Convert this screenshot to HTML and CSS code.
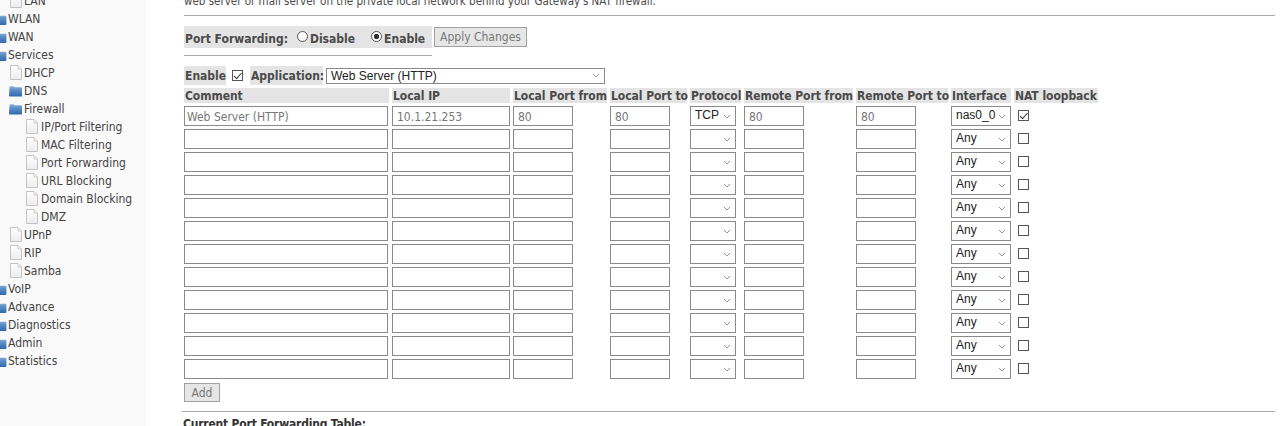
FILE: index.html
```html
<!DOCTYPE html>
<html lang="en">
<head>
<meta charset="utf-8">
<title>Port Forwarding</title>
<link rel="stylesheet" href="styles.css">
</head>
<body>
<svg class="defs" width="0" height="0" aria-hidden="true">
  <defs>
    <linearGradient id="fg" x1="0" y1="0" x2="0" y2="1"><stop offset="0" stop-color="#8fb4dc"/><stop offset=".35" stop-color="#5f90c8"/><stop offset="1" stop-color="#2f69ad"/></linearGradient>
    <linearGradient id="pg" x1="0" y1="0" x2="0" y2="1"><stop offset="0" stop-color="#ffffff"/><stop offset="1" stop-color="#ececec"/></linearGradient>
  </defs>
  <symbol id="book" viewBox="0 0 14 12"><path d="M.5 2 Q.5 .8 1.7 .8 L5 .8 L6 2 L13 2 Q14 2 14 3 L14 11 Q14 12 13 12 L1 12 Q0 12 0 11Z" fill="url(#fg)"/></symbol>
  <symbol id="page" viewBox="0 0 12 15"><path d="M.5 .5 H8 L11.5 4 V14.5 H.5Z" fill="url(#pg)" stroke="#c4c4c4"/><path d="M8 .5 V4 H11.5" fill="none" stroke="#cfcfcf"/></symbol>
</svg>
<div class="page">
  <nav class="side">
    <div class="item l1 first"><svg class="ipage"><use href="#page"/></svg>LAN</div>
    <div class="item l0"><svg class="ifold"><use href="#book"/></svg>WLAN</div>
    <div class="item l0"><svg class="ifold"><use href="#book"/></svg>WAN</div>
    <div class="item l0"><svg class="ifold"><use href="#book"/></svg>Services</div>
    <div class="item l1"><svg class="ipage"><use href="#page"/></svg>DHCP</div>
    <div class="item l1"><svg class="ifold big"><use href="#book"/></svg>DNS</div>
    <div class="item l1"><svg class="ifold big"><use href="#book"/></svg>Firewall</div>
    <div class="item l2"><svg class="ipage"><use href="#page"/></svg>IP/Port Filtering</div>
    <div class="item l2"><svg class="ipage"><use href="#page"/></svg>MAC Filtering</div>
    <div class="item l2"><svg class="ipage"><use href="#page"/></svg>Port Forwarding</div>
    <div class="item l2"><svg class="ipage"><use href="#page"/></svg>URL Blocking</div>
    <div class="item l2"><svg class="ipage"><use href="#page"/></svg>Domain Blocking</div>
    <div class="item l2"><svg class="ipage"><use href="#page"/></svg>DMZ</div>
    <div class="item l1"><svg class="ipage"><use href="#page"/></svg>UPnP</div>
    <div class="item l1"><svg class="ipage"><use href="#page"/></svg>RIP</div>
    <div class="item l1"><svg class="ipage"><use href="#page"/></svg>Samba</div>
    <div class="item l0"><svg class="ifold"><use href="#book"/></svg>VoIP</div>
    <div class="item l0"><svg class="ifold"><use href="#book"/></svg>Advance</div>
    <div class="item l0"><svg class="ifold"><use href="#book"/></svg>Diagnostics</div>
    <div class="item l0"><svg class="ifold"><use href="#book"/></svg>Admin</div>
    <div class="item l0"><svg class="ifold"><use href="#book"/></svg>Statistics</div>
  </nav>
  <main class="main">
    <p class="intro">web server or mail server on the private local network behind your Gateway's NAT firewall.</p>
    <hr class="rule">
    <div class="pf-row">
      <div class="pf-label">
        <b>Port Forwarding:</b>
        <label class="opt"><input class="radio" type="radio" name="pf"><b>Disable</b></label>
        <label class="opt"><input class="radio" type="radio" name="pf" checked><b>Enable</b></label>
      </div>
      <button class="btn apply" type="button">Apply Changes</button>
    </div>
    <hr class="rule short">
    <div class="app-row">
      <b class="shade">Enable</b>
      <input class="chk" type="checkbox" checked>
      <b class="shade">Application:</b>
      <select class="app-select"><option>Web Server (HTTP)</option></select>
    </div>
    <table class="rules">
      <colgroup>
        <col class="c1"><col class="c2"><col class="c3"><col class="c4"><col class="c5"><col class="c6"><col class="c7"><col class="c8"><col class="c9">
      </colgroup>
      <thead>
        <tr><th>Comment</th><th>Local IP</th><th>Local Port from</th><th>Local Port to</th><th>Protocol</th><th>Remote Port from</th><th>Remote Port to</th><th>Interface</th><th>NAT loopback</th></tr>
      </thead>
      <tbody>
        <tr>
          <td><input class="w-comment" value="Web Server (HTTP)"></td>
          <td><input class="w-ip" value="10.1.21.253"></td>
          <td><input class="w-port" value="80"></td>
          <td><input class="w-port" value="80"></td>
          <td><select class="w-proto"><option>TCP</option></select></td>
          <td><input class="w-port" value="80"></td>
          <td><input class="w-port" value="80"></td>
          <td><select class="w-if"><option>nas0_0</option></select></td>
          <td><input class="chk" type="checkbox" checked></td>
        </tr>
        <tr><td><input class="w-comment"></td><td><input class="w-ip"></td><td><input class="w-port"></td><td><input class="w-port"></td><td><select class="w-proto"><option></option></select></td><td><input class="w-port"></td><td><input class="w-port"></td><td><select class="w-if"><option>Any</option></select></td><td><input class="chk" type="checkbox"></td></tr>
        <tr><td><input class="w-comment"></td><td><input class="w-ip"></td><td><input class="w-port"></td><td><input class="w-port"></td><td><select class="w-proto"><option></option></select></td><td><input class="w-port"></td><td><input class="w-port"></td><td><select class="w-if"><option>Any</option></select></td><td><input class="chk" type="checkbox"></td></tr>
        <tr><td><input class="w-comment"></td><td><input class="w-ip"></td><td><input class="w-port"></td><td><input class="w-port"></td><td><select class="w-proto"><option></option></select></td><td><input class="w-port"></td><td><input class="w-port"></td><td><select class="w-if"><option>Any</option></select></td><td><input class="chk" type="checkbox"></td></tr>
        <tr><td><input class="w-comment"></td><td><input class="w-ip"></td><td><input class="w-port"></td><td><input class="w-port"></td><td><select class="w-proto"><option></option></select></td><td><input class="w-port"></td><td><input class="w-port"></td><td><select class="w-if"><option>Any</option></select></td><td><input class="chk" type="checkbox"></td></tr>
        <tr><td><input class="w-comment"></td><td><input class="w-ip"></td><td><input class="w-port"></td><td><input class="w-port"></td><td><select class="w-proto"><option></option></select></td><td><input class="w-port"></td><td><input class="w-port"></td><td><select class="w-if"><option>Any</option></select></td><td><input class="chk" type="checkbox"></td></tr>
        <tr><td><input class="w-comment"></td><td><input class="w-ip"></td><td><input class="w-port"></td><td><input class="w-port"></td><td><select class="w-proto"><option></option></select></td><td><input class="w-port"></td><td><input class="w-port"></td><td><select class="w-if"><option>Any</option></select></td><td><input class="chk" type="checkbox"></td></tr>
        <tr><td><input class="w-comment"></td><td><input class="w-ip"></td><td><input class="w-port"></td><td><input class="w-port"></td><td><select class="w-proto"><option></option></select></td><td><input class="w-port"></td><td><input class="w-port"></td><td><select class="w-if"><option>Any</option></select></td><td><input class="chk" type="checkbox"></td></tr>
        <tr><td><input class="w-comment"></td><td><input class="w-ip"></td><td><input class="w-port"></td><td><input class="w-port"></td><td><select class="w-proto"><option></option></select></td><td><input class="w-port"></td><td><input class="w-port"></td><td><select class="w-if"><option>Any</option></select></td><td><input class="chk" type="checkbox"></td></tr>
        <tr><td><input class="w-comment"></td><td><input class="w-ip"></td><td><input class="w-port"></td><td><input class="w-port"></td><td><select class="w-proto"><option></option></select></td><td><input class="w-port"></td><td><input class="w-port"></td><td><select class="w-if"><option>Any</option></select></td><td><input class="chk" type="checkbox"></td></tr>
        <tr><td><input class="w-comment"></td><td><input class="w-ip"></td><td><input class="w-port"></td><td><input class="w-port"></td><td><select class="w-proto"><option></option></select></td><td><input class="w-port"></td><td><input class="w-port"></td><td><select class="w-if"><option>Any</option></select></td><td><input class="chk" type="checkbox"></td></tr>
        <tr><td><input class="w-comment"></td><td><input class="w-ip"></td><td><input class="w-port"></td><td><input class="w-port"></td><td><select class="w-proto"><option></option></select></td><td><input class="w-port"></td><td><input class="w-port"></td><td><select class="w-if"><option>Any</option></select></td><td><input class="chk" type="checkbox"></td></tr>
      </tbody>
    </table>
    <button class="btn add" type="button">Add</button>
    <hr class="rule lower">
    <p class="current"><b>Current Port Forwarding Table:</b></p>
  </main>
</div>
</body>
</html>
```
FILE: styles.css
```css
html, body { margin: 0; padding: 0; height: 426px; overflow: hidden; background: #fff; }
body { font-family: "DejaVu Sans Condensed", "DejaVu Sans", sans-serif; font-stretch: condensed; font-size: 12px; color: #4a4a4a; }
.defs { display: block; height: 0; }
.page { display: flex; height: 426px; overflow: hidden; align-items: flex-start; }

.side { width: 146px; height: 426px; flex: none; background: #f9f9f9; box-sizing: border-box; overflow: hidden; font-size: 12px; }
.item { height: 18px; line-height: 18px; display: flex; align-items: center; white-space: nowrap; color: #444; }
.item.first { margin-top: -8px; }
.l0 { padding-left: 0; }
.l1 { padding-left: 10px; }
.l2 { padding-left: 26px; }
.ifold { width: 14px; height: 11px; flex: none; margin-left: -7px; margin-right: 1px; }
.ifold.big { width: 13px; height: 12px; margin-left: -1px; margin-right: 2px; }
.ipage { width: 12px; height: 15px; flex: none; margin-right: 2px; margin-top: -1px; }
.l2 .ipage { margin-right: 3px; }

.main { flex: 1; min-width: 0; padding: 0 5px 0 38px; margin-top: -7px; }
.intro { margin: 0; height: 16px; line-height: 16px; font-size: 11.5px; }
.rule { border: 0; border-top: 1px solid #a8a8a8; margin: 6px 0 0 0; }
.pf-row { display: flex; align-items: flex-start; margin: 10px 0 0 0; }
.pf-label { background: #e4e4e4; height: 22px; width: 248px; display: flex; align-items: center; box-sizing: border-box; padding: 3px 0 0 1px; white-space: nowrap; }
.opt { display: flex; align-items: center; margin-left: 9px; }
.opt + .opt { margin-left: 16px; }
.radio { appearance: none; width: 11px; height: 11px; margin: 0 2px 4px 0; border: 1px solid #555; border-radius: 50%; background: #fff; box-sizing: border-box; }
.radio:checked { background: radial-gradient(circle, #333 0 2.4px, #fff 3px); }
.btn { font: 12px "DejaVu Sans Condensed", "DejaVu Sans", sans-serif; font-stretch: condensed; color: #777; background: #e6e6e6; border: 1px solid #a0a0a0; padding: 0; }
.apply { width: 93px; height: 20px; margin: 1px 0 0 2px; }
.rule.short { width: 248px; margin: 7px 0 0 0; }
.app-row { display: flex; align-items: center; margin: 10px 0 0 0; height: 19px; }
.shade { background: #e4e4e4; height: 19px; line-height: 20px; padding: 0 1px; box-sizing: border-box; width: 42px; }
.shade + .chk + .shade { width: 73px; }
.chk { appearance: none; width: 11px; height: 11px; margin: 0; border: 1px solid #555; background: #fff; box-sizing: border-box; position: relative; }
.chk:checked::after { content: ""; position: absolute; left: 2.5px; top: 0; width: 3px; height: 6.5px; border: solid #333; border-width: 0 1.3px 1.3px 0; transform: rotate(42deg); }
.app-row .chk { margin: 0 7px 0 6px; }

select { appearance: none; box-sizing: border-box; padding: 0 0 0 4px; background: #fff url("data:image/svg+xml,%3Csvg xmlns='http://www.w3.org/2000/svg' width='8' height='5'%3E%3Cpath d='M1 1l3 3 3-3' fill='none' stroke='%23999' stroke-width='1'/%3E%3C/svg%3E") no-repeat right 4px center; border: 1px solid #8a8a8a; font: 12px "Liberation Sans", Arial, sans-serif; color: #222; }
.app-select { width: 279px; height: 16px; margin-left: 3px; line-height: 14px; }

.rules { border-collapse: separate; border-spacing: 3px; table-layout: fixed; width: 920px; margin: 0 0 0 -3px; }
.c1 { width: 205px; } .c2 { width: 118px; } .c3 { width: 94px; } .c4 { width: 77px; } .c5 { width: 51px; } .c6 { width: 109px; } .c7 { width: 92px; } .c8 { width: 60px; } .c9 { width: 84px; }
th { background: #e4e4e4; text-align: left; padding: 1px 0 0 1px; height: 14px; line-height: 14px; white-space: nowrap; color: #4a4a4a; font-size: 12px; letter-spacing: -.05px; }
td { padding: 0; height: 20px; }
td input:not(.chk) { box-sizing: border-box; height: 20px; padding: 2px 3px 0; border: 1px solid #8a8a8a; background: #fff; font: 12px "DejaVu Sans Condensed", "DejaVu Sans", sans-serif; font-stretch: condensed; color: #777; display: block; }
td input.w-comment { padding-left: 2px; }
td input.w-ip, td input.w-port { padding-left: 4px; }
td select { height: 20px; display: block; padding: 0 0 2px 4px; }
td .chk { display: block; margin: -1px 0 0 4px; }
.w-comment { width: 204px; } .w-ip { width: 118px; } .w-port { width: 60px; } .w-proto { width: 46px; } .w-if { width: 60px; }

.add { display: block; width: 36px; height: 19px; margin: 1px 0 0 0; }
.rule.lower { margin: 9px 0 0 -2px; }
.current { margin: 4px 0 0 -1px; font-size: 12px; letter-spacing: -.2px; line-height: 16px; color: #333; }
```
